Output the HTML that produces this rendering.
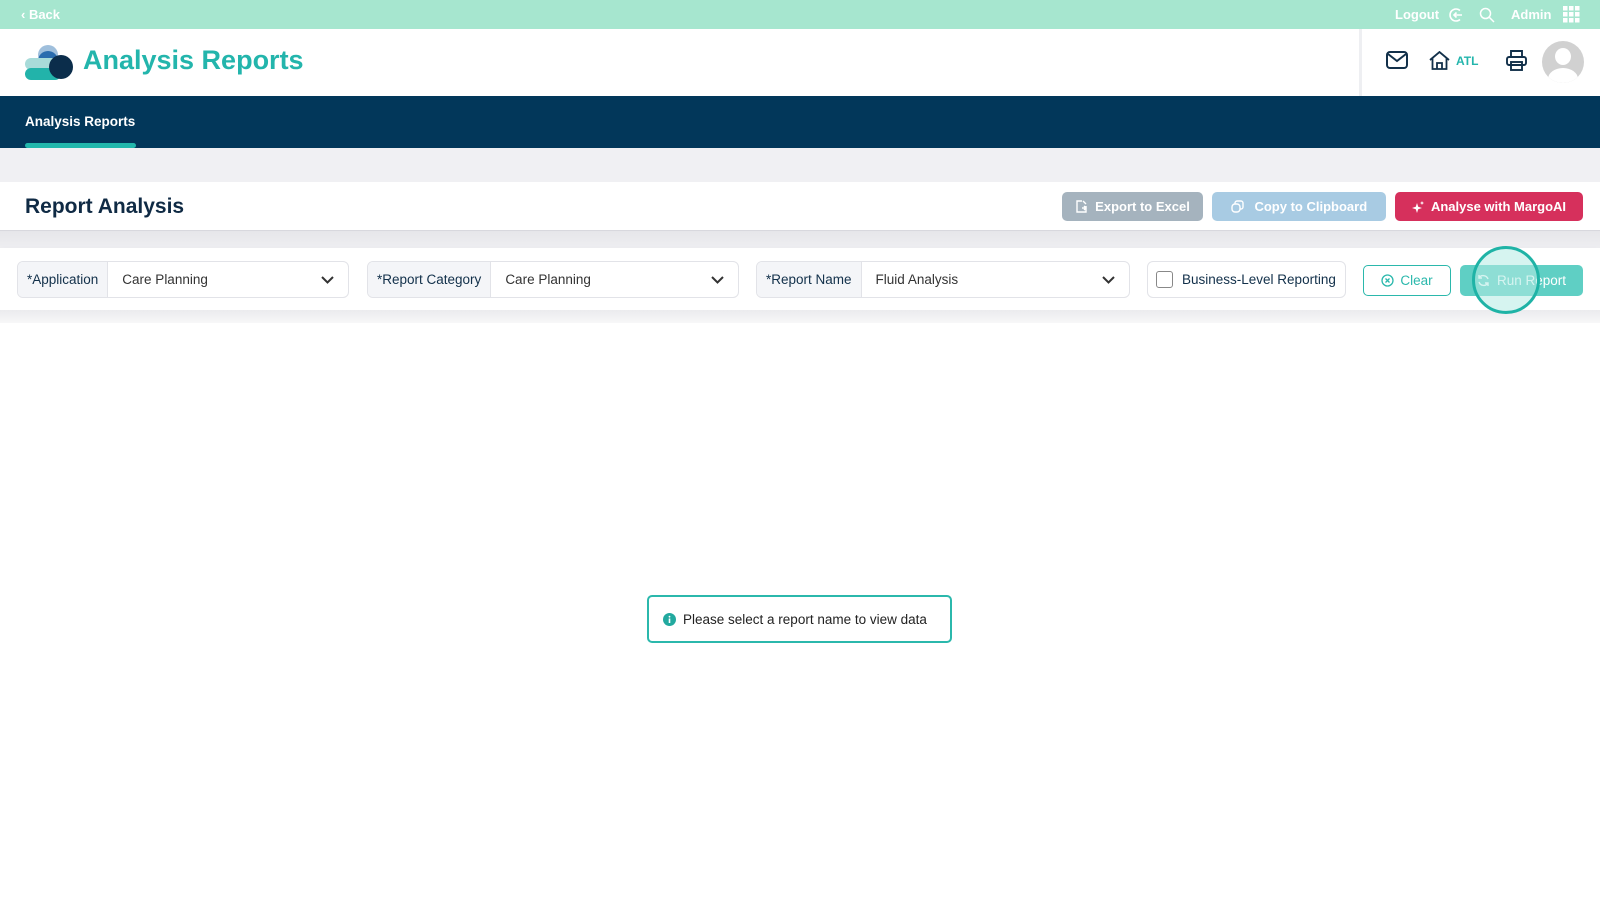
<!DOCTYPE html>
<html><head><meta charset="utf-8"><style>
*{box-sizing:border-box;margin:0;padding:0}
body{width:1600px;height:900px;background:#fff;font-family:"Liberation Sans",sans-serif;position:relative;overflow:hidden;color:#12304a}
.abs{position:absolute}
.top{left:0;top:0;width:1600px;height:29px;background:#a6e6cf;color:#fff;font-size:13px;font-weight:bold}
.hdr{left:0;top:29px;width:1600px;height:67px;background:#fff}
.nav{left:0;top:96px;width:1600px;height:52px;background:#02375a}
.band{left:0;top:148px;width:1600px;height:34px;background:#f0f0f3}
.sec{left:0;top:182px;width:1600px;height:49px;background:#fff;border-bottom:1px solid #d8d8de}
.gap{left:0;top:231px;width:1600px;height:17px;background:linear-gradient(#e6e6ea,#eeeef1)}
.flt{left:0;top:248px;width:1600px;height:62px;background:#fff;box-shadow:0 4px 8px rgba(0,0,0,.06)}
.sh{left:0;top:310px;width:1600px;height:13px;background:linear-gradient(#ebebee,#f7f7f8)}
.sel{top:261px;height:37px;border:1px solid #e2e3e8;border-radius:6px;display:flex;font-size:13.5px;overflow:hidden;background:#fff}
.sel .l{background:#f4f5f8;border-right:1px solid #e2e3e8;padding:0 9px;display:flex;align-items:center;color:#12304a}
.sel .v{flex:1;display:flex;align-items:center;padding-left:14px;color:#333}
.sel svg{margin-right:14px;align-self:center}
.btn{top:192px;height:29px;border-radius:5px;color:#fff;font-size:13px;font-weight:bold;display:flex;align-items:center;justify-content:center;gap:7px}
</style></head><body>
<div class="abs top">
 <span class="abs" style="left:21px;top:7px">‹ Back</span>
 <span class="abs" style="left:1395px;top:7px">Logout</span>
 <svg class="abs" style="left:1448px;top:7px" width="16" height="16" viewBox="0 0 16 16" fill="none" stroke="#fff" stroke-width="1.6"><path d="M12 3.5A6 6 0 1 0 12 12.5"/><path d="M14 8H6M8.5 5.5 6 8l2.5 2.5"/></svg>
 <svg class="abs" style="left:1479px;top:7px" width="16" height="16" viewBox="0 0 16 16" fill="none" stroke="#fff" stroke-width="1.5"><circle cx="6.5" cy="6.5" r="5"/><path d="M10.5 10.5 15 15"/></svg>
 <span class="abs" style="left:1511px;top:7px">Admin</span>
 <svg class="abs" style="left:1563px;top:6px" width="17" height="17" viewBox="0 0 17 17" fill="#fff"><rect x="0" y="0" width="4.5" height="4.5"/><rect x="6" y="0" width="4.5" height="4.5"/><rect x="12" y="0" width="4.5" height="4.5"/><rect x="0" y="6" width="4.5" height="4.5"/><rect x="6" y="6" width="4.5" height="4.5"/><rect x="12" y="6" width="4.5" height="4.5"/><rect x="0" y="12" width="4.5" height="4.5"/><rect x="6" y="12" width="4.5" height="4.5"/><rect x="12" y="12" width="4.5" height="4.5"/></svg>
</div>
<div class="abs hdr">
 <svg class="abs" style="left:25px;top:15px" width="48" height="36" viewBox="0 0 48 36"><circle cx="23" cy="11" r="10" fill="#9fbfdc"/><path d="M13 17a10 10 0 0 1 20 0z" fill="#2a6cae"/><rect x="0" y="14" width="36" height="12" rx="6" fill="#a8dbd9"/><rect x="0" y="24" width="36" height="12" rx="6" fill="#22b3aa"/><circle cx="36" cy="23" r="12" fill="#0b2d4b"/></svg>
 <div class="abs" style="left:83px;top:16px;font-size:27px;font-weight:bold;color:#23b5ac">Analysis Reports</div>
 <div class="abs" style="left:1359px;top:0;width:3px;height:67px;background:#eeeff2"></div>
 <svg class="abs" style="left:1386px;top:22px" width="22" height="18" viewBox="0 0 22 18" fill="none" stroke="#12304a" stroke-width="2"><rect x="1" y="1" width="20" height="16" rx="3"/><path d="M2 3l9 7 9-7"/></svg>
 <svg class="abs" style="left:1429px;top:22px" width="21" height="19" viewBox="0 0 21 19" fill="none" stroke="#12304a" stroke-width="1.8"><path d="M1 9 10.5 1 20 9M3.5 7v11h14V7M8 18v-6h5v6"/></svg>
 <span class="abs" style="left:1456px;top:25px;font-size:12px;font-weight:bold;color:#23b5ac">ATL</span>
 <svg class="abs" style="left:1506px;top:21px" width="21" height="21" viewBox="0 0 21 21" fill="none" stroke="#12304a" stroke-width="1.9"><path d="M5 7V1h11v6"/><rect x="1" y="7" width="19" height="8" rx="2"/><rect x="5" y="12" width="11" height="8"/></svg>
 <div class="abs" style="left:1542px;top:12px;width:42px;height:42px;border-radius:50%;background:#d1d1d1;overflow:hidden"><div class="abs" style="left:13px;top:7px;width:16px;height:17px;border-radius:50%;background:#fff"></div><div class="abs" style="left:6px;top:27px;width:30px;height:22px;border-radius:50%;background:#fff"></div></div>
</div>
<div class="abs nav"><div class="abs" style="left:25px;top:18px;color:#fff;font-size:13.5px;font-weight:bold">Analysis Reports</div><div class="abs" style="left:25px;top:47px;width:111px;height:5px;border-radius:3px;background:#22b8ac"></div></div>
<div class="abs band"></div>
<div class="abs sec"><div class="abs" style="left:25px;top:13px;font-size:21px;font-weight:bold;color:#0f2a44">Report Analysis</div></div>
<div class="btn abs" style="left:1062px;width:141px;background:#a5b3be"><svg width="13" height="13" viewBox="0 0 13 13" fill="none" stroke="#fff" stroke-width="1.4"><path d="M7 1H2v11h9V6M8 1l3 3M7 8h4M9 6l2 2-2 2"/></svg>Export to Excel</div>
<div class="btn abs" style="left:1212px;width:174px;background:#a8cbe3"><svg width="13" height="13" viewBox="0 0 13 13" fill="none" stroke="#fff" stroke-width="1.4"><rect x="1" y="4" width="8" height="8" rx="3"/><path d="M4 4V3a2 2 0 0 1 2-2h4a2 2 0 0 1 2 2v4a2 2 0 0 1-2 2H9"/></svg>&nbsp;Copy to Clipboard</div>
<div class="btn abs" style="left:1395px;width:188px;background:#d6305c"><svg width="12" height="12" viewBox="0 0 12 12" fill="#fff"><path d="M5 2 6.2 5.8 10 7 6.2 8.2 5 12 3.8 8.2 0 7 3.8 5.8z"/><path d="M10 0l.6 1.4L12 2l-1.4.6L10 4l-.6-1.4L8 2l1.4-.6z"/></svg>Analyse with MargoAI</div>
<div class="abs gap"></div>
<div class="abs flt"></div>
<div class="abs sh"></div>
<div class="sel abs" style="left:17px;width:332px"><div class="l">*Application</div><div class="v">Care Planning</div><svg width="13" height="8" viewBox="0 0 13 8" fill="none" stroke="#333" stroke-width="2"><path d="M1 1l5.5 5.5L12 1"/></svg></div>
<div class="sel abs" style="left:367px;width:372px"><div class="l">*Report Category</div><div class="v">Care Planning</div><svg width="13" height="8" viewBox="0 0 13 8" fill="none" stroke="#333" stroke-width="2"><path d="M1 1l5.5 5.5L12 1"/></svg></div>
<div class="sel abs" style="left:756px;width:374px"><div class="l">*Report Name</div><div class="v">Fluid Analysis</div><svg width="13" height="8" viewBox="0 0 13 8" fill="none" stroke="#333" stroke-width="2"><path d="M1 1l5.5 5.5L12 1"/></svg></div>
<div class="sel abs" style="left:1147px;width:199px;align-items:center;padding-left:8px;color:#12304a"><div style="width:17px;height:17px;border:1.5px solid #888;border-radius:3px;margin-right:9px"></div>Business-Level Reporting</div>
<div class="abs" style="left:1363px;top:265px;width:88px;height:31px;border:1.5px solid #2bb8ac;border-radius:5px;color:#2bb8ac;font-size:13.5px;display:flex;align-items:center;justify-content:center;gap:6px"><svg width="13" height="13" viewBox="0 0 13 13" fill="none" stroke="#2bb8ac" stroke-width="1.3"><circle cx="6.5" cy="6.5" r="5.5"/><path d="M4.5 4.5l4 4M8.5 4.5l-4 4"/></svg>Clear</div>
<div class="abs" style="left:1460px;top:265px;width:123px;height:31px;background:#5fcfc4;border-radius:5px;color:#fff;font-size:13.5px;display:flex;align-items:center;justify-content:center;gap:7px"><svg width="13" height="13" viewBox="0 0 13 13" fill="none" stroke="#fff" stroke-width="1.4"><path d="M11 5A5 5 0 0 0 2 4M2 8a5 5 0 0 0 9 1M2 1v3h3M11 12V9H8"/></svg>Run Report</div>
<div class="abs" style="left:1472px;top:246px;width:68px;height:68px;border-radius:50%;border:3.5px solid #1fb3a6;background:rgba(180,235,228,.55)"></div>
<div class="abs" style="left:647px;top:595px;width:305px;height:48px;border:2px solid #2bb8ac;border-radius:5px;display:flex;align-items:center;padding-left:14px;font-size:13.5px;color:#222;gap:7px"><svg width="13" height="13" viewBox="0 0 13 13"><circle cx="6.5" cy="6.5" r="6.5" fill="#22a99f"/><rect x="5.7" y="5.5" width="1.6" height="4.5" fill="#fff"/><circle cx="6.5" cy="3.7" r=".9" fill="#fff"/></svg>Please select a report name to view data</div>
</body></html>
